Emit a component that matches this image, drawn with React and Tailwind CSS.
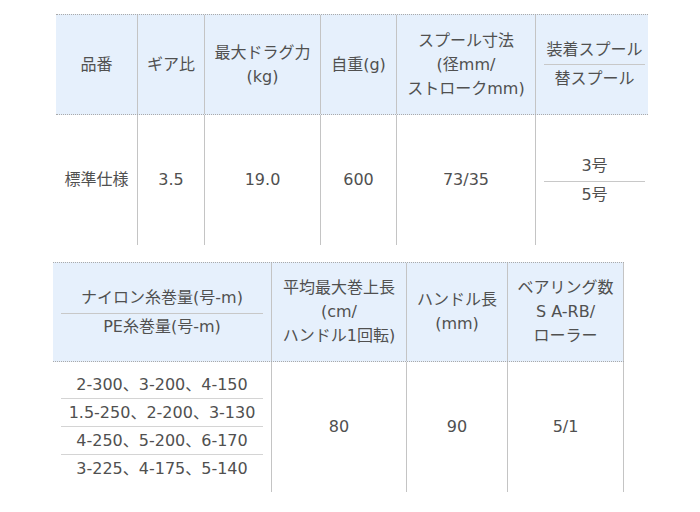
import React from "react";

const font = { fontFamily: '"DejaVu Sans", "Noto Sans CJK JP", sans-serif' };

function Cell({ children, first, right }) {
  return (
    <div
      className={
        "flex flex-col items-center justify-center text-center " +
        (first ? "" : "border-l border-[#c4c4c4] ") +
        (right ? "border-r border-[#c4c4c4] " : "")
      }
    >
      {children}
    </div>
  );
}

export default function App() {
  return (
    <div
      className="w-[700px] h-[512px] bg-white text-[#505050] text-[16px] leading-[24px]"
      style={font}
    >
      <div className="pt-[14px] pl-[56px]">
        {/* Table 1 */}
        <div className="w-[592px]">
          <div className="grid grid-cols-[81px_67px_116px_76px_139px_113px] h-[101px] bg-[#e6f0fc] border-y border-dotted border-[#aaa]">
            <Cell first>品番</Cell>
            <Cell>ギア比</Cell>
            <Cell>
              <span>最大ドラグ力</span>
              <span>(kg)</span>
            </Cell>
            <Cell>自重(g)</Cell>
            <Cell>
              <span>スプール寸法</span>
              <span>(径mm/</span>
              <span>ストロークmm)</span>
            </Cell>
            <div className="flex flex-col justify-center border-l border-[#c4c4c4] pl-[8px] pr-[3px] text-center">
              <div className="border-b border-[#c8c8c8] pb-[2px]">装着スプール</div>
              <div className="pt-[2px]">替スプール</div>
            </div>
          </div>
          <div className="grid grid-cols-[81px_67px_116px_76px_139px_113px] h-[130px]">
            <Cell first>標準仕様</Cell>
            <Cell>3.5</Cell>
            <Cell>19.0</Cell>
            <Cell>600</Cell>
            <Cell>73/35</Cell>
            <div className="flex flex-col justify-center border-l border-[#c4c4c4] pl-[8px] pr-[3px] text-center">
              <div className="border-b border-[#c8c8c8] pb-[3px]">3号</div>
              <div className="pt-[1px]">5号</div>
            </div>
          </div>
        </div>
      </div>

      <div className="pt-[17px] pl-[53px]">
        {/* Table 2 */}
        <div className="w-[571px]">
          <div className="grid grid-cols-[218px_135px_101px_117px] h-[100px] bg-[#e6f0fc] border-y border-dotted border-[#aaa]">
            <div className="flex flex-col justify-center px-[8px] text-center">
              <div className="border-b border-[#c8c8c8] pb-[3px]">ナイロン糸巻量(号-m)</div>
              <div className="pt-[1px]">PE糸巻量(号-m)</div>
            </div>
            <Cell>
              <span>平均最大巻上長</span>
              <span>(cm/</span>
              <span>ハンドル1回転)</span>
            </Cell>
            <Cell>
              <span>ハンドル長</span>
              <span>(mm)</span>
            </Cell>
            <Cell right>
              <span>ベアリング数</span>
              <span>S A-RB/</span>
              <span>ローラー</span>
            </Cell>
          </div>
          <div className="grid grid-cols-[218px_135px_101px_117px] h-[130px]">
            <div className="flex flex-col justify-center px-[8px] text-center">
              <div className="h-[28px] leading-[27px] border-b border-[#d4d4d4]">2-300、3-200、4-150</div>
              <div className="h-[28px] leading-[27px] border-b border-[#d4d4d4]">1.5-250、2-200、3-130</div>
              <div className="h-[28px] leading-[27px] border-b border-[#d4d4d4]">4-250、5-200、6-170</div>
              <div className="h-[28px] leading-[27px]">3-225、4-175、5-140</div>
            </div>
            <Cell>80</Cell>
            <Cell>90</Cell>
            <Cell right>5/1</Cell>
          </div>
        </div>
      </div>
    </div>
  );
}
